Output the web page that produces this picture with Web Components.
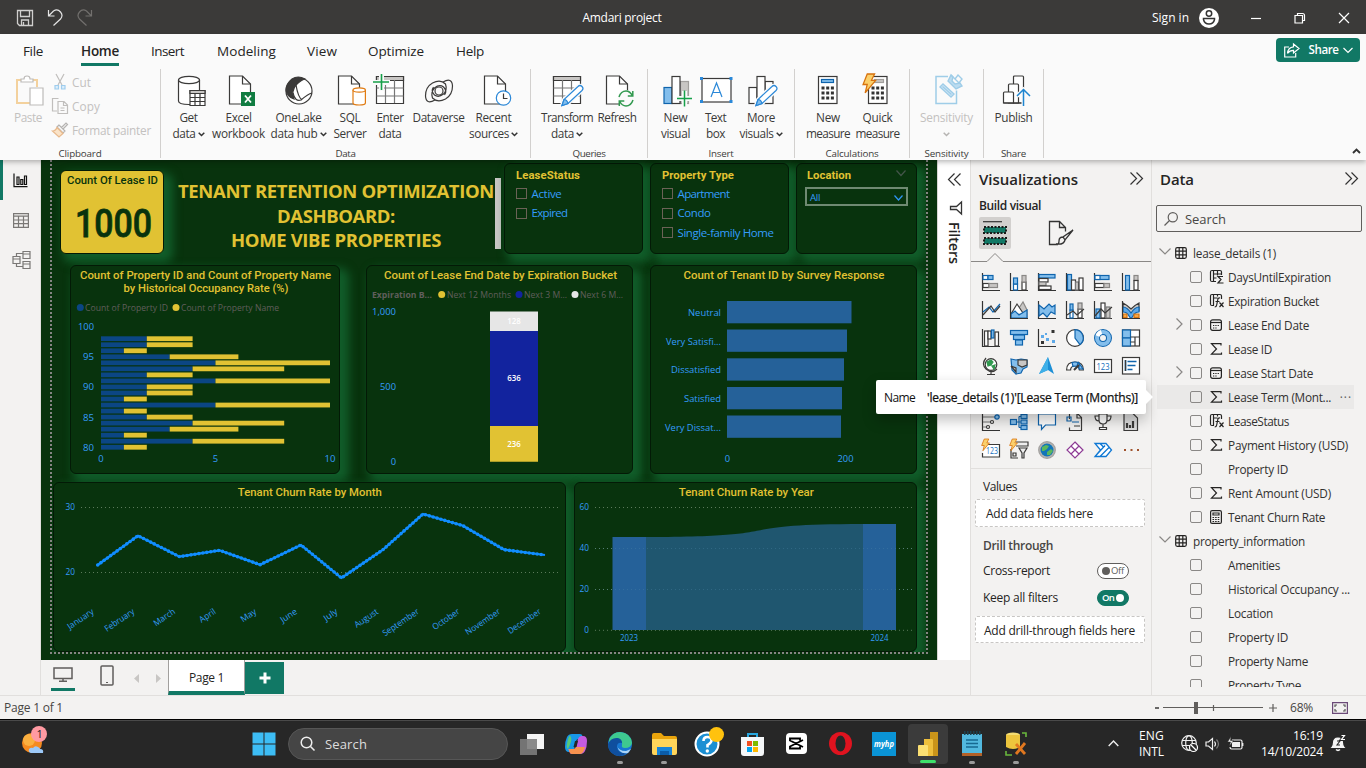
<!DOCTYPE html>
<html lang="en">
<head>
<meta charset="utf-8">
<title>Amdari project</title>
<style>
html,body{margin:0;width:1366px;height:768px;overflow:hidden;background:#f3f2f1}
body{font:12px/16px "Open Sans","Noto Sans",sans-serif;color:#252423}
</style>
</head>
<body>
<app-window></app-window>
<script>
// Registers an element whose shadow root is rebuilt from its attributes.
function define(name, css, html) {
  customElements.define(name, class extends HTMLElement {
    constructor() { super(); this.attachShadow({ mode: 'open' }); }
    connectedCallback() {
      const t = document.createElement('template');
      t.innerHTML = '<style>:host{display:block;box-sizing:border-box}' + css + '</style>' +
        (typeof html === 'function' ? html(k => this.getAttribute(k) ?? '', this) : html);
      this.shadowRoot.replaceChildren(t.content.cloneNode(true));
    }
  });
}
const S = (vb, body, w, h) => `<svg width="${w || vb.split(' ')[2]}" height="${h || vb.split(' ')[3]}" viewBox="${vb}" fill="none" stroke="#3b3a39" stroke-width="1.2">${body}</svg>`;
const page = (x, y = 1) => `<path fill="#fff" d="M${x} ${y}h13l8 8v20h-21z"/><path d="M${x + 13} ${y}v8h8"/>`;
const pencil = '<path d="M11 30.500l2-6 14-13a2.800 2.800 0 0 1 4 4l-14 13z" stroke="#fafafa" stroke-width="4"/><path fill="#fff" stroke="#2b88d8" d="M11 30.500l2-6 14-13a2.800 2.800 0 0 1 4 4l-14 13z"/><path fill="#83beec" stroke="#2b88d8" d="M11 30.500l2-6q3 0 4 4z"/>';
const bolt = (x, y, s) => `<path transform="translate(${x} ${y}) scale(${s})" d="M5 0h7l-3 6h4l-10 12 2-8h-4z" fill="#fbd06c" stroke="#d8720d"/>`;
const dots = (x, y, dx, dy) => [0, 1, 2].map(r => [0, 1, 2].map(c => `<rect x="${x + c * dx}" y="${y + r * dy}" width="3" height="3" fill="#333" stroke="none"/>`).join('')).join('');
const B = '#83beec', D = '#0f64ad', G = '#c8c6c4', K = '#3b3a39';
const axis = '<path d="M.5 0v17.500h17.500" stroke="#333"/>';
const r = (x, y, w, h, f = '#fff', s = D) => `<rect x="${x}" y="${y}" width="${w}" height="${h}" fill="${f}" stroke="${s}"/>`;
const num = (x, y, w, s) => `<text x="${x}" y="${y}" font-family="Open Sans" font-size="${s}" textLength="${w}" lengthAdjust="spacingAndGlyphs" fill="#0f6cbd" stroke="none">123</text>`;

const ICONS = {
  save: S('0 0 16 16', '<path stroke="#d0cfce" d="M.5.500h15v15h-13l-2-2zM3.500.500v6h9v-6M4.500 15v-5h7v5M6.500 12v3" stroke-width="1.300"/>'),
  undo: S('0 0 16 17', '<path stroke="#e5e5e5" d="M1.500 1v6h6M1.500 7l5-5q4-2.500 7 1t0 7l-7 6.500"/>'),
  redo: S('0 0 16 17', '<path stroke="#72706e" d="M14.500 1v6h-6M14.500 7l-5-5q-4-2.500-7 1t0 7l7 6.500"/>'),
  user: S('0 0 20 20', '<circle cx="10" cy="10" r="10" fill="#fff" stroke="none"/><circle cx="10" cy="5.500" r="2.700" stroke="#333" stroke-width="1.500"/><path d="M4.500 10.500h11v1q-1 4.500-5.500 4.500t-5.500-4.500z" stroke="#333" stroke-width="1.500"/>'),
  min: S('0 0 12 12', '<path d="M1 6.500h10" stroke="#fff"/>'),
  max: S('0 0 12 12', '<path d="M1 3.500h7.500v7.500h-7.500zM3.500 3.500v-2h5q2 0 2 2v5h-2" stroke="#fff"/>'),
  close: S('0 0 12 12', '<path d="M1 1l10 10M11 1l-10 10" stroke="#fff"/>'),
  share: S('0 0 16 15', '<path stroke="#fff" d="M5 4H.700v10h11v-4M9.500 1l5.500 4.500-5.500 4.500v-2.600q-4 0-6 3 .500-6 6-6.600z"/>'),
  chevW: S('0 0 10 7', '<path stroke="#fff" d="M.500 1l4.500 4.500 4.500-4.500"/>'),
  chev: S('0 0 7 5', '<path d="M.700.700l2.800 2.800 2.800-2.800" stroke="#333" stroke-width="1.500"/>'),
  chevG: S('0 0 7 5', '<path d="M.700.700l2.800 2.800 2.800-2.800" stroke="#b5b3b1" stroke-width="1.500"/>'),
  up: S('0 0 9 6', '<path d="M1 5l3.500-3.500 3.500 3.500" stroke="#333" stroke-width="1.900"/>'),
  paste: S('0 0 28 32', '<path d="M7 5h-6v23h13M16 5h5v7" stroke="#f3d19d" stroke-width="2"/><path d="M5 7h12v-3h-3q0-3-3-3t-3 3h-3zM14 13h13v17h-13z" fill="#fff" stroke="#bdbbb9"/>'),
  cut: S('0 0 12 16', '<path stroke="#c0bebc" d="M2 0l6 11M10 0l-6 11"/><path stroke="#9fcdee" fill="#dceefa" d="M1 11.500h3.500v3.500h-3.500zM7.500 11.500h3.500v3.500h-3.500z"/>'),
  copy: S('0 0 16 17', '<path stroke="#c0bebc" d="M5 13h-4.500v-12.500h6M6 3.500h6l3.500 3.500v8.500h-9.500zM11.500 4v3.500h4M8.500 10h4M8.500 12.500h4"/>'),
  painter: S('0 0 16 16', '<path stroke="#b5b3b1" d="M8 4l4 4M9.500 5.500l4.500-4.500 1.500 1.500-4.500 4.500M7 3l-2 2 6 6 2-2z"/><path stroke="#e8b98c" fill="#fae3c8" d="M5 5.500l6 6-4 3.500-6.500-6q3 0 4.500-3.500z"/>'),
  get: S('0 0 32 32', '<path fill="#fff" d="M5.500 5v21q0 3.500 10.500 3.500t10.500-3.500v-21"/><ellipse cx="16" cy="5" rx="10.500" ry="3.700" fill="#fff"/><path fill="#fff" d="M17 15.500h15v15h-15z"/><path fill="#c8c6c4" d="M17 15.500h15v3h-15z"/><path d="M17 22.500h15M17 26.500h15M22 18.500v12M27 18.500v12"/>'),
  excel: S('0 0 32 32', page(6.500) + '<path d="M18 17h14v14h-14z" fill="#107c41" stroke="none"/><path d="M22 20.500l6 7M28 20.500l-6 7" stroke="#fff" stroke-width="1.800"/>'),
  onelake: S('0 0 32 32', '<circle cx="16" cy="16" r="13" fill="#fff"/><path fill="#3b3a39" d="M9 4q6-4 13 0-4 1-9 6-5 6-2 14-7-2-8-9 0-6 6-11z"/><path d="M13 10q2 12 6 15M10 18q2 9 8 7 7-6 11-7"/>'),
  sql: S('0 0 32 32', page(4.500) + '<path fill="#fff" stroke="#e07b12" d="M19 15v13q0 2 6.200 2t6.200-2v-13"/><ellipse cx="25.200" cy="15" rx="6.200" ry="2.200" fill="#fff" stroke="#e07b12"/>'),
  enter: S('0 0 32 32', '<path fill="#fff" d="M2.500 1.500h27v27h-27z"/><path fill="#c8c6c4" d="M2.500 1.500h27v4h-27z"/><path d="M2.500 13h27M2.500 21h27M11.500 5v23M20.500 5v23" stroke="#777"/><path d="M7.500-1v17M-1 7.500h17" stroke="#fafafa" stroke-width="5"/><path d="M7.500-1v16M-1 7h16" stroke="#17a04a" stroke-width="1.600"/>'),
  dataverse: S('0 0 32 32', '<circle cx="16" cy="16" r="4"/><path d="M20 7q9-5 9.500 4 0 9-7 13-8 4-13-1-2-6 2-10 5-4 9-1 4 4 1 8M12 25q-9 5-9.500-4 0-9 7-13 8-4 13 1 2 6-2 10-5 4-9 1-4-4-1-8"/>'),
  recent: S('0 0 32 32', page(6.500) + '<circle cx="25.500" cy="23" r="7.200" fill="#fff" stroke="#2b88d8"/><path d="M25.500 18.500v5h4"/>'),
  transform: S('0 0 32 32', '<path fill="#fff" d="M2.500 1.500h27v27h-27z"/><path fill="#c8c6c4" d="M2.500 1.500h27v4h-27z"/><path d="M2.500 13h27M2.500 21h27M11.500 5v23M20.500 5v23" stroke="#777"/>' + pencil),
  refresh: S('0 0 32 32', page(5.500) + '<circle cx="25" cy="23.500" r="8.500" fill="#fafafa" stroke="none"/><path stroke="#31994f" stroke-width="1.500" d="M18 22q2-6 7-6 4 0 6.500 5M31.800 16v5h-5M32 25q-2 6-7 6-4 0-6.500-5M18.300 31v-5h5"/>'),
  visual: S('0 0 32 32', r(4, 12.500, 8, 16, B) + r(20.500, 6.500, 8, 22, G, '#a19f9d') + r(12, 1.500, 8, 27, '#fff', K) + '<path d="M24.500 16v16M17 23.500h15" stroke="#fafafa" stroke-width="5"/><path d="M24.500 15.500v16M17 23.500h15" stroke="#17a04a" stroke-width="1.500"/>'),
  textbox: S('0 0 32 32', r(2, 3.500, 29, 23.500, '#fff', K) + '<path fill="#2b88d8" stroke="none" d="M0 2h3v3h-3zM29.500 2h3v3h-3zM0 25h3v3h-3zM29.500 25h3v3h-3z"/><path d="M11 22l5.500-14 5.500 14M13 17.500h7" stroke="#2b88d8"/>'),
  more: S('0 0 32 32', r(4, 12.500, 8, 16, '#fff', K) + r(20, 6.500, 8, 22, '#fff', K) + r(12, 1.500, 8, 27, '#fff', K) + pencil),
  measure: S('0 0 32 32', r(6.500, 1.500, 18.500, 27, '#fff', K) + r(9.500, 4.500, 12, 3, B) + dots(9.500, 11.500, 4.700, 5)),
  quick: S('0 0 32 32', r(6.500, 1.500, 18.500, 27, '#fff', K) + r(12.500, 4.500, 9, 3, G, '#a19f9d') + dots(9.500, 11.500, 4.700, 5) + bolt(0, -1, 1.050)),
  sens: S('0 0 32 32', '<path stroke="#9fcde8" d="M17 1.500h-12v27h20.500v-13" stroke-width="1.500"/><g stroke="#9fcde8" fill="#fafafa" stroke-width="1.400"><path fill="#cfe6f5" d="M9 12l3-3 11 10-3 3z"/><path d="M11.500 11.500l9 8"/><path fill="#bcdcf0" d="M17 6l8 8 6-3-2-3-5 1-3-3 1-4-2-2z"/><path d="M20 0l5 5M27 0l4 4-3 4-4-4z"/></g>'),
  publish: S('0 0 32 32', '<path fill="#fff" d="M15.500 28v-26q0-1 1-1h8q1 0 1 1v26z"/><path fill="#fff" d="M10.500 28v-18q0-1 1-1h8q1 0 1 1v18z"/><path fill="#fff" d="M5.500 28v-10q0-1 1-1h8q1 0 1 1v10z"/><path d="M5.500 28h19"/><path d="M25.500 14v18M19 21l6.500-6.500 6.500 6.500" stroke="#fafafa" stroke-width="4"/><path d="M25.500 14v17M19 21l6.500-6.500 6.500 6.500" stroke="#1e85d0" stroke-width="1.500"/>'),
  report: S('0 0 15 15', '<path stroke="#111" d="M1 .500v13.200h13.500M4 4h2v7.500h-2zM7.800 6.500h2v5h-2zM11.500 3h2v8.500h-2z" stroke-width="1.200"/>'),
  table: S('0 0 16 15', '<path stroke="#7a7876" d="M.600.600h14.800v13.800h-14.800zM.600 3.200h14.800M.600 7h14.800M.600 10.700h14.800M5.500 3v11M10.500 3v11"/>'),
  model: S('0 0 19 18', '<path stroke="#7a7876" d="M1 5.500h7v7h-7zM1 8h7M11 .500h7v7h-7zM11 3h7M11 10.500h7v7h-7zM11 13h7M4.500 5.500v-3h6M4.500 12.500v3h6"/>'),
  desktop: S('0 0 20 15', '<path stroke="#605e5c" stroke-width="1.500" d="M1 1h18v10.500h-18zM10 12v2.500M6 14.300h8"/>'),
  phone: S('0 0 14 21', '<rect x="1" y="1" width="12" height="19" rx="1" stroke="#605e5c" stroke-width="1.500"/><path d="M6 17.500h2" stroke="#605e5c"/>'),
  left: S('0 0 5 9', '<path d="M5 0v9l-5-4.500z" fill="#c8c6c4" stroke="none"/>'),
  right: S('0 0 5 9', '<path d="M0 0v9l5-4.500z" fill="#c8c6c4" stroke="none"/>'),
  plus: S('0 0 12 12', '<path d="M6 .500v11M.500 6h11" stroke="#fff" stroke-width="3"/>'),
  collapse: S('0 0 13 13', '<path d="M6.500.500l-6 6 6 6M12.500.500l-6 6 6 6" stroke="#333"/>'),
  expand: S('0 0 13 13', '<path d="M.500.500l6 6-6 6M6.500.500l6 6-6 6" stroke="#333"/>'),
  funnel: S('0 0 12 14', '<path d="M11.500 1v12l-5-4.500h-6v-3h6z" stroke="#333" stroke-width="1.300"/>'),
  build: S('0 0 24 25', '<path d="M0 .700h19" stroke="#333"/><path d="M1 6h22v6h-22zM1 17h22v6h-22z" fill="#117865" stroke="#1b1a19" stroke-width="2" stroke-dasharray="2 1.500"/>'),
  format: S('0 0 25 25', '<path d="M9 23.500h-8.500v-23h10l6 6v4M10.500.500v6h6" stroke="#333" stroke-width="1.300"/><path d="M24 9l-10 7 2 3 8-10zM14 16q-4 0-4 4t-3 3q8 1 9-4z" stroke="#333" stroke-width="1.300" fill="#f3f2f1"/>'),
  glass: S('0 0 14 14', '<circle cx="8.800" cy="5.200" r="4.600" stroke="#605e5c"/><path d="M5.500 8.500l-5 5" stroke="#605e5c"/>'),
  tchev: S('0 0 12 7', '<path d="M.500.500l5.500 5.500 5.500-5.500" stroke="#8a8886"/>'),
  rchev: S('0 0 7 12', '<path d="M.500.500l5.500 5.500-5.500 5.500" stroke="#8a8886"/>'),
  tbl: S('0 0 12 12', '<rect x=".7" y=".7" width="10.600" height="10.600" rx="1.500" stroke="#252423"/><path stroke="#252423" d="M4.200.700v10.600M7.800.700v10.600M.700 4.200h10.600M.700 7.800h10.600"/>'),
  sigma: S('0 0 12 12', '<path stroke="#252423" d="M11 2.500v-1.800h-9.500l5 5.300-5 5.200h10v-1.800"/>'),
  cal: S('0 0 12 12', '<rect x=".6" y=".8" width="10.800" height="10.500" rx="2" stroke="#252423"/><path stroke="#252423" d="M.600 3.500h10.800"/><path d="M3 6.500h6.500M3 9h4.500" stroke="#252423" stroke-dasharray="1.300 1"/>'),
  calc: S('0 0 12 14', '<rect x=".6" y=".6" width="10.800" height="12.800" rx="1.500" stroke="#252423"/><path stroke="#252423" d="M3 3h6v2h-6z"/><path d="M2.500 7.500h7M2.500 9.500h7M2.500 11.500h7" stroke="#252423" stroke-dasharray="1.600 1"/>'),
  colsum: S('0 0 14 14', '<path stroke="#252423" d="M6 11.500h-4q-1.500 0-1.500-1.500v-8q0-1.500 1.500-1.500h8q1.500 0 1.500 1.500v3M3.500.500v11M3.500 4h8M3.500 8h3M7.500.500v5M13 6.500h-5l3 3-3 3.500h5.500"/>'),
  fx: S('0 0 14 14', '<path stroke="#252423" d="M4 11.500h-2q-1.500 0-1.500-1.500v-8q0-1.500 1.500-1.500h8q1.500 0 1.500 1.500v3M3.500.500v11M3.500 4h4M7.500.500v2M10 4q-2-.5-2.300 2l-1 5q-.3 2-2 2M5.500 7.500h4M9.500 8.500l4 4.500M13.500 8.500l-4 4.500"/>'),
  v0: axis + r(1, 2.500, 5, 4) + r(6, 2.500, 5, 4, B) + r(1, 10.500, 6, 4, '#fff', K) + r(7, 10.500, 8.500, 4, G, '#8a8886'),
  v1: axis + r(3.500, 11, 4, 6) + r(3.500, 5, 4, 6, B) + r(12, 9, 4, 8, '#fff', K) + r(12, 2.500, 4, 6.500, G, '#8a8886'),
  v2: axis + r(1, 1.500, 16, 3.500, B) + r(1, 5.500, 9, 3.500, '#fff', K) + r(1, 9, 7, 3.500, G, '#777') + r(1, 13, 12, 3.500, '#fff', K),
  v3: axis + r(1.500, 1.500, 4, 15.500, B) + r(5.500, 7, 4, 10, '#fff', K) + r(9.500, 9, 3, 8, G, '#777') + r(13, 5, 4, 12, '#fff', K),
  v4: axis + r(1, 2.500, 14, 4, B) + r(1, 2.500, 5, 4) + r(1, 10.500, 9, 4, '#fff', K) + r(10, 10.500, 5.500, 4, G, '#8a8886'),
  v5: axis + r(3.500, 2.500, 4, 14.500, B) + r(12, 2.500, 4, 5, G, '#8a8886') + r(12, 7.500, 4, 9.500, '#fff', K),
  v6: axis + '<path d="M1 11l6-5 4 5 7-8" stroke="#0f64ad"/><path d="M1 14l8-9 4 6 5-6" />',
  v7: '<path d="M7 10l6-9 4 8v8h-10z" fill="#c8c6c4" stroke="#8a8886"/><path d="M1 13l6-10 6 9" fill="#fff"/><path d="M1 13l4-3 4 4 8-5v8h-16z" fill="#83beec" stroke="#0f64ad"/>' + axis,
  v8: axis + '<path d="M1 4l5 4 5-5 3 3 3-2v9l-4-2-4 5-4-4-4 3z" fill="#83beec" stroke="#0f64ad"/>',
  v9: axis + r(4, 9, 3, 8) + r(4, 3, 3, 6, B) + r(12, 8, 4, 9, '#fff', K) + r(12, 2, 4, 6, G, '#777') + '<path d="M1 14l6-4 4 4 7-6"/>',
  v10: axis + r(2, 8, 4, 9, B) + r(7, 2, 4, 15, '#fff', K) + r(12, 6, 4, 11, G, '#777') + '<path d="M1 15l6-7 4 4 7-6"/>',
  v11: '<path d="M1 2q4 2 8 6 4-4 8-6v8q-4 0-8 6-4-6-8-6z" fill="#c8c6c4"/><path d="M1 6q4 0 8 6 4-6 8-6v5q-4 0-6 4t-4 0q-2-4-6-4z" fill="#5ea9e8" stroke="#0f64ad"/><path d="M1 13h4v3.500h-4zM12 13h5v3.500h-5z" fill="#f3a648" stroke="#d8720d"/>' + axis,
  v12: axis + r(2.500, 2, 3.500, 15, '#fff', K) + r(6, 2, 3, 8, '#fff', K) + r(9.500, 1, 2.500, 8, B) + r(13, 3, 3.500, 14, '#fff', K),
  v13: r(.500, 1.500, 17, 4, B) + r(3.500, 6, 11, 4.500, B) + r(5.500, 11, 7, 5, B),
  v14: axis + '<path d="M13.500 1h3v3h-3zM3 12h3v3h-3z" fill="#333" stroke="none"/><path d="M3 6h3v3h-3zM8 9h3v3h-3zM14 11h3v3h-3zM7 4h2v2h-2z" fill="#5ea9e8" stroke="none"/>',
  v15: '<circle cx="9" cy="9" r="8.400" fill="#fff"/><path d="M9 .600a8.400 8.400 0 0 1 5 15l-5-6.600z" fill="#83beec" stroke="#0f64ad"/>',
  v16: '<circle cx="9" cy="9" r="6" stroke="#0f64ad" stroke-width="6"/><circle cx="9" cy="9" r="6" stroke="#83beec" stroke-width="4"/><path d="M3.500 7q1-3 4-4" stroke="#fff" stroke-width="4"/>',
  v17: r(.500, 1, 17, 16, '#fff', K) + r(.500, 1, 8, 8, B) + r(.500, 9, 8, 8, B) + '<path d="M8.500 8h9M13 8v9M8.500 13h5"/>',
  v18: '<circle cx="9" cy="7.500" r="5.800" fill="#fff"/><path d="M5 5l4-2 2 2-2 3-3 1zM10 9l3-1-1 4z" fill="#31994f" stroke="#31994f"/><path d="M4 1q-5 6 0 11 6 5 11 0M9 15v2M5 17.500h8"/>',
  v19: '<path d="M1 2l5 1 5-1 6 1v7l-4 2-2 4-5 1-4-4z" fill="#83beec" stroke="#0f64ad"/><path d="M8 3l9 0v5l-5 2-4-2zM1 9l5 2v4z" fill="#c8c6c4"/>',
  v20: '<path d="M10 0l6 17-6-4-9 4z" fill="#1c8fd6" stroke="none"/><path d="M10 0l0 13-9 4z" fill="#3fb0e8" stroke="none"/>',
  v21: '<path d="M.600 13q0-8 8.400-8t8.400 8h-4q0-4-4.400-4t-4.400 4z" fill="#fff"/><path d="M6 5.500q3-1 6 0l-1 4q-2-1-4 0z M13 6l4 6h-4z" fill="#83beec" stroke="#0f64ad"/><path d="M8 13l5-5" stroke-width="2"/>',
  v22: r(.500, 2.500, 17, 13, '#fff', K) + num(2.500, 12.500, 13, 9),
  v23: r(.500, .500, 17, 16.500, '#fff', K) + '<path d="M3.500 3v11M5.500 4.500h9M5.500 8.500h8M5.500 12.500h5" stroke="#0f64ad" stroke-width="1.700"/><path d="M3.500 3v11"/>',
  v30: axis + '<path d="M1 4h12M1 9h8M1 14h5" stroke="#777"/><circle cx="15" cy="4" r="2.200" fill="#83beec" stroke="#0f64ad"/><circle cx="10" cy="9" r="1.500" fill="#fff"/><circle cx="6" cy="14" r="1.500" fill="#fff"/>',
  v31: r(.500, 6.500, 6, 5, B) + r(11, 1.500, 6, 4, B) + r(11, 7, 6, 4, B) + r(11, 12.500, 6, 4, B) + '<path d="M7 9h4M9 3.500v11M9 3.500h2M9 14.500h2" stroke="#0f64ad"/>',
  v32: '<path d="M.500 1h17v11h-10l-4 4.500v-4.500h-3z" fill="#fff" stroke="#0f64ad"/>',
  v33: '<path d="M3.500 6v-5.500h8l4 4v13h-12v-3M11 0v5h5M8 13h6" /><path d="M1 4h4v4h-4zM6 9h7" stroke="#0f64ad"/>',
  v34: '<path d="M5 1h8v6q0 4-4 4t-4-4zM5 3h-4q0 5 4 5M13 3h4q0 5-4 5M9 11v4M5.500 16.500h7v-2h-7z" fill="#fff"/>',
  v35: '<path d="M2 .500h9l4.500 4.500v12.500h-13.500z" fill="#ddd"/><path d="M5 15v-5M8 15v-3M11 15v-7" stroke-width="2.200"/>',
  v36: '<path d="M6 3.500h11.500v12.500h-17v-4" fill="#fff"/>' + num(4, 13, 12, 9) + bolt(-1, -2, .65),
  v37: '<path d="M6 1h12v4h-12M1 8v9h7M3 12h3v3h-3zM9 7h8l-3 5v5h-2v-5z" fill="#eee"/>' + bolt(-1, -2, .65),
  v38: '<circle cx="9" cy="9" r="8.300" fill="#b5b3b1" stroke="#a3a19f"/><circle cx="9" cy="9" r="6.500" fill="#1276b8" stroke="none"/><path d="M4 6l4-2 3 1-2 3-3 2-2 0zM9 11l4-3 2 2-3 4-3 0z" fill="#5cb85c" stroke="none"/>',
  v39: '<path d="M9 1l4 4-4 4-4-4zM9 9l4 4-4 4-4-4zM5 5l4 4-4 4-4-4zM13 5l4 4-4 4-4-4z" fill="#fff" stroke="#8d3a94"/>',
  v40: '<path d="M1 2.500h11l5.500 6.500-5.500 6.500h-11l5.500-6.500zM1 15.500l10-11M6 15.500l9-9M6 2.500l4 4" stroke="#0f78d4" stroke-width="1.300" fill="#fff"/>',
  v41: '<path d="M2 9h2M8.500 9h2M15 9h2" stroke="#a0522d" stroke-width="2"/>',
  fit: S('0 0 16 12', '<path stroke="#6b4a78" d="M.600.600h14.800v10.800h-14.800z"/><path stroke="#555" d="M3 5v-2h2M11 3h2v2M3 7v2h2M11 9h2v-2"/>'),
  weather: S('0 0 32 32', '<circle cx="14" cy="17" r="10" fill="#f58a1f" stroke="none"/><circle cx="11" cy="14" r="6" fill="#fbb040" stroke="none"/><path d="M13 27q-3-1-2-4 2-2 4-1 2-3 5-1 2 1 2 2 4 0 3 4z" fill="#9cc8f7" stroke="none"/><circle cx="21" cy="8" r="8" fill="#ff9aa2" stroke="none"/><text x="18.500" y="12" font-size="11" font-family="Open Sans" fill="#222" stroke="none">1</text>'),
  start: S('0 0 24 24', '<path d="M.500.500h11v11h-11zM12.500.500h11v11h-11zM.500 12.500h11v11h-11zM12.500 12.500h11v11h-11z" fill="#3dbdf5" stroke="none"/>'),
  find: S('0 0 15 15', '<circle cx="6.500" cy="6.500" r="5.300" stroke="#eee" stroke-width="1.500"/><path d="M10.500 10.500l4 4" stroke="#eee" stroke-width="1.600"/>'),
  taskview: S('0 0 24 22', '<path d="M7 1h17v15h-17z" fill="#f4f4f4" stroke="none"/><path d="M0 6h17v16h-17z" fill="#7d7d7d" opacity=".9" stroke="none"/>'),
  copilot: S('0 0 24 24', '<path d="M8 2h8q2 0 2.500 2l1 3h-5q-2 0-2.500 2l-2 8q-1 3-4 3h-1q-4 0-4-5 0-6 2-10 1.500-3 5-3z" fill="#1798e8" stroke="none"/><path d="M4 17q-2-1-1-5 1-7 3-8.500 2 2 1 6t-3 7.500z" fill="#59c878" stroke="none"/><path d="M16 22h-8q-2 0-2.500-2l-1-3h5q2 0 2.500-2l2-8q1-3 4-3h1q4 0 4 5 0 6-2 10-1.500 3-5 3z" fill="#c55be0" stroke="none"/><path d="M16 22h-8q-2 0-2.500-2l-1-3h5q2 0 2.500-2h9q-1.500 7-5 7z" fill="#f7924f" stroke="none"/><path d="M11 9h3l-1.500 6h-3z" fill="#272727" stroke="none"/>'),
  edge: S('0 0 24 24', '<circle cx="12" cy="12" r="12" fill="#1677d2" stroke="none"/><path d="M1 8q3-8 11-8 11 1 12 11-1 5-7 5-4 0-3-3 1-5-4-6-6 0-9 5z" fill="#3ec98f" stroke="none"/><path d="M0 12q3-7 10-6 4 1 4 5-5-1-5 4 1 7 10 6-6 5-12 2-7-3-7-11z" fill="#0f4f9e" stroke="none"/><path d="M9 13q1 6 9 6l5-2-3 4q-9 2-11-8z" fill="#cfeaff" stroke="none" opacity=".8"/>'),
  explorer: S('0 0 25 22', '<path d="M0 2q0-2 2-2h7l3 3h11q2 0 2 2v15h-25z" fill="#e9a40c" stroke="none"/><path d="M0 6h25v14q0 2-2 2h-21q-2 0-2-2z" fill="#ffd55a" stroke="none"/><path d="M5 14h15v8h-15z" fill="#1784d8" stroke="none"/><path d="M8 18h9v4h-9z" fill="#0b5ca8" stroke="none"/>'),
  help: S('0 0 28 28', '<circle cx="13" cy="14" r="11.500" fill="#1b8fd3" stroke="#fff" stroke-width="2"/><path d="M9.500 11q0-4 4-4t4 3.500q0 2-4 4.500v2.500" stroke="#fff" stroke-width="2.600"/><circle cx="13.300" cy="21" r="1.700" fill="#fff" stroke="none"/><circle cx="22.500" cy="4.500" r="7.500" fill="#ffc20e" stroke="none"/>'),
  store: S('0 0 23 24', '<path d="M7 6v-4h9v4" stroke="#29a8e0" stroke-width="2"/><path d="M0 5h23v16q0 3-3 3h-17q-3 0-3-3z" fill="#f5f7f9" stroke="none"/><path d="M6 9h5v5h-5z" fill="#f25022" stroke="none"/><path d="M12 9h5v5h-5z" fill="#7fba00" stroke="none"/><path d="M6 15h5v5h-5z" fill="#00a4ef" stroke="none"/><path d="M12 15h5v5h-5z" fill="#ffb900" stroke="none"/>'),
  capcut: S('0 0 21 21', '<rect width="21" height="21" rx="4" fill="#fff" stroke="none"/><path d="M17 7l-13 6.500v2h10v-2M17 14l-13-6.500v-2h10v2" stroke="#000" stroke-width="1.900"/>'),
  opera: S('0 0 23 23', '<ellipse cx="11.500" cy="11.500" rx="11.500" ry="11.500" fill="#e0131f" stroke="none"/><ellipse cx="11.500" cy="11.500" rx="5" ry="8" fill="#272727" stroke="none"/>'),
  hp: S('0 0 24 24', '<path d="M0 0h24v24h-24z" fill="#0a94d6" stroke="none"/><text x="2" y="15" font-family="Open Sans" font-style="italic" font-weight="700" font-size="9" textLength="20" lengthAdjust="spacingAndGlyphs" fill="#fff" stroke="none">myhp</text>'),
  pbi: S('0 0 20 24', '<path d="M12 0h8v24h-8z" fill="#c9941a" stroke="none"/><path d="M6 7h8q1 0 1 1v16h-9z" fill="#eebf3c" stroke="none"/><path d="M0 14q0-1 1-1h8q1 0 1 1v10h-10z" fill="#fbdf72" stroke="none"/>'),
  notepad: S('0 0 20 25', '<path d="M0 3h20v19h-20z" fill="#52b9df" stroke="none"/><path d="M0 22h20v3h-20z" fill="#b36128" stroke="none"/><path d="M2 2h17" stroke="#1d4250" stroke-width="4" stroke-dasharray="1.500 1.500"/><path d="M4 9h12M4 12.500h12M4 16h12" stroke="#176a92" stroke-width="1.500"/>'),
  tool: S('0 0 23 24', '<ellipse cx="8" cy="3" rx="7" ry="2.500" fill="#f5dd72" stroke="none"/><path d="M1 3h14v12q-7 4-14 0z" fill="#edc53d" stroke="none"/><path d="M17 1h4v4M1 19v4h6" stroke="#69b83d" stroke-width="1.600"/><path d="M11 12l9 10M20 11l-9 11" stroke="#e0771f" stroke-width="2.800"/>'),
  tup: S('0 0 11 7', '<path d="M.700 6l4.800-5 4.800 5" stroke="#eee" stroke-width="1.400"/>'),
  globe: S('0 0 18 18', '<circle cx="8" cy="8" r="7.300" stroke="#eee"/><ellipse cx="8" cy="8" rx="3.300" ry="7.300" stroke="#eee"/><path d="M1 5.500h14M1 10.500h8" stroke="#eee"/><circle cx="12.500" cy="12.500" r="4" fill="#272727" stroke="#fff"/><path d="M10 10l5 5" stroke="#fff"/>'),
  sound: S('0 0 16 14', '<path d="M1 5v4h2.500l4 3.500v-11l-4 3.500z" stroke="#eee"/><path d="M9.500 4.500q2 2.500 0 5" stroke="#eee"/><path d="M11.500 2.500q4 4.500 0 9" stroke="#777"/>'),
  batt: S('0 0 17 14', '<path d="M5 3h8.500q1.500 0 1.500 1.500v6q0 1.500-1.500 1.500h-9q-1.500 0-1.500-2M15.800 6v3" stroke="#eee"/><path d="M5 5h8v5h-8z" fill="#eee" stroke="none"/><path d="M4-.5l-3.500 5.500h3l-1 4 4-5.500h-3z" fill="#eee" stroke="#272727" stroke-width=".5"/>'),
  bell: S('0 0 15 15', '<path d="M1 11.500q1.500-1.500 1.500-4.500 0-5 4.500-5t4.500 5q0 3 1.500 4.500z" fill="#f5f5f5" stroke="#f5f5f5"/><path d="M5 13.500q2 1.800 4 0" stroke="#f5f5f5" stroke-width="1.500"/><path d="M6 5h3l-3 4h3" stroke="#272727" stroke-width="1.100"/><path d="M10.500-.5h3l-3 4h3.500" stroke="#272727" stroke-width="3"/><path d="M10.500-.5h3l-3 4h3.500" stroke="#fff"/>')
};

define('ui-icon', ':host{display:inline-flex;flex:none}svg{display:block;overflow:visible}', a => {
  const s = ICONS[a('name')] || '';
  return s.startsWith('<svg') ? s : S('0 0 18 18', s);
});

// Label that tracks its glyphs to fill the width in "w".
customElements.define('ui-t', class extends HTMLElement {
  constructor() {
    super();
    this.attachShadow({ mode: 'open' }).innerHTML = '<style>:host{display:inline-block;white-space:pre;flex:none}</style><slot></slot>';
  }
  connectedCallback() {
    const w = +this.getAttribute('w'), n = this.textContent.length;
    if (!w || !n) return;
    const range = document.createRange();
    range.selectNodeContents(this);
    const natural = range.getBoundingClientRect().width;
    this.style.letterSpacing = (w - natural) / n + 'px';
    this.style.width = w + 'px';
  }
});
const t = (w, s, cls = '') => `<ui-t w="${w}" class="${cls}">${s}</ui-t>`;
const ic = (n, cls = '') => `<ui-icon name="${n}" class="${cls}"></ui-icon>`;

define('title-bar', `:host{height:34px;background:#3b3a39;color:#fff;display:grid;grid-template-columns:562px 120px 1fr;align-items:center;font-size:12px;padding-top:1px}
  .l{display:flex;gap:14px;padding-left:17px;align-items:center}.c{text-align:center}.r{display:flex;justify-content:flex-end;align-items:center;padding-right:16px}
  .u{margin:0 31px 0 10px}.m{margin-right:32px}`,
  `<div class="l">${ic('save')}${ic('undo')}${ic('redo')}</div><div class="c">${t(79, 'Amdari project')}</div>
   <div class="r">${t(37, 'Sign in')}${ic('user', 'u')}${ic('min', 'm')}${ic('max', 'm')}${ic('close')}</div>`);

define('ribbon-tabs', `:host{height:34px;display:flex;padding:0 6px 2px 23px;font-size:13.500px;align-items:center}
  ui-t{height:31px;line-height:32px;box-sizing:border-box}.on{font-weight:600;border-bottom:3px solid #117865}
  .b{margin-left:auto;width:84px;height:24px;border-radius:4px;background:#117865;color:#fff;display:flex;align-items:center;justify-content:center;font-size:11.600px;font-weight:600}
  .b ui-t{height:auto;line-height:16px;margin:0 4px 0 9px}`,
  () => [['File', 20, 38], ['Home', 38, 32, 'on'], ['Insert', 33, 33], ['Modeling', 59, 31], ['View', 30, 31], ['Optimize', 56, 32], ['Help', 28, 0]]
    .map(([s, w, g, c]) => `<ui-t w="${w}" class="${c || ''}" style="margin-right:${g}px">${s}</ui-t>`).join('') +
    `<div class="b">${ic('share')}${t(30, 'Share')}${ic('chevW')}</div>`);

define('ribbon-button', `:host{display:flex;flex-direction:column;align-items:center;flex:none;color:#3b3a39;font-size:11.800px;line-height:16px}
  :host([off]){color:#c3c1bf}ui-icon{height:32px;margin-bottom:2px}.r{display:flex;align-items:center;gap:2px;height:16px}.r ui-icon{height:5px;margin:2px 0 0}`,
  (a, el) => {
    el.style.width = a('w') + 'px';
    const c = a('chev') ? ic(a('off') ? 'chevG' : 'chev') : '';
    return ic(a('icon')) + t(a('w1'), a('l1')) + `<div class="r">${a('l2') ? t(a('w2'), a('l2')) : ''}${c}</div>`;
  });

define('ribbon-group', `:host{display:flex;flex-direction:column;justify-content:space-between;flex:none;height:89px;border-right:1px solid #d2d0ce}
  .i{display:flex;justify-content:center;padding-top:6px}.n{text-align:center;font-size:9.800px;line-height:13px;height:11px;color:#3b3a39}`,
  (a, el) => { el.style.width = a('w') + 'px'; return `<div class="i" style="margin-left:${a('dx') || 0}px"><slot></slot></div><div class="n">${t(a('lw'), a('label'))}</div>`; });

define('clipboard-tools', `:host{display:flex;color:#c3c1bf;font-size:11.800px;width:150px;padding-left:6px}
  .p{display:flex;flex-direction:column;align-items:center;width:28px;margin-left:3px;flex:none}.p ui-icon{height:34px;margin-left:3px}
  .s{margin-left:10px;height:72px;display:grid;grid-template-rows:repeat(3,24px);margin-top:-5px;align-items:center}.s div{display:flex;align-items:center}.s ui-icon{width:16px;justify-content:center;margin-right:4px}`,
  `<div class="p">${ic('paste')}${t(28, 'Paste')}</div><div class="s"><div>${ic('cut')}${t(19, 'Cut')}</div><div>${ic('copy')}${t(28, 'Copy')}</div><div>${ic('painter')}${t(79, 'Format painter')}</div></div>`);

const rb = (icon, w, l1, w1, l2 = '', w2 = '', chev = '', off = '') =>
  `<ribbon-button icon="${icon}" w="${w}" l1="${l1}" w1="${w1}" l2="${l2}" w2="${w2}"${chev ? ' chev="1"' : ''}${off ? ' off="1"' : ''}></ribbon-button>`;
define('app-ribbon', `:host{height:126px;background:#fafafa;box-shadow:0 2px 5px rgba(0,0,0,.28);position:relative;z-index:3}
  .g{display:flex;height:91px;padding-top:1px;align-items:flex-start}.e{margin-left:auto;padding:73px 5px 0 0}`,
  `<ribbon-tabs></ribbon-tabs><div class="g">
  <ribbon-group w="161" label="Clipboard" lw="43"><clipboard-tools></clipboard-tools></ribbon-group>
  <ribbon-group w="370" label="Data" lw="20" dx="-4">${rb('get', 46, 'Get', 18, 'data', 23, 1)}${rb('excel', 54, 'Excel', 26, 'workbook', 53)}${rb('onelake', 66, 'OneLake', 46, 'data hub', 47, 1)}${rb('sql', 37, 'SQL', 21, 'Server', 33)}${rb('enter', 43, 'Enter', 27, 'data', 23)}${rb('dataverse', 54, 'Dataverse', 52)}${rb('recent', 56, 'Recent', 36, 'sources', 40, 1)}</ribbon-group>
  <ribbon-group w="117" label="Queries" lw="33">${rb('transform', 56, 'Transform', 52, 'data', 23, 1)}${rb('refresh', 44, 'Refresh', 39)}</ribbon-group>
  <ribbon-group w="147" label="Insert" lw="25">${rb('visual', 43, 'New', 24, 'visual', 29)}${rb('textbox', 37, 'Text', 21, 'box', 19)}${rb('more', 54, 'More', 28, 'visuals', 34, 1)}</ribbon-group>
  <ribbon-group w="115" label="Calculations" lw="53">${rb('measure', 51, 'New', 24, 'measure', 44)}${rb('quick', 48, 'Quick', 30, 'measure', 44)}</ribbon-group>
  <ribbon-group w="74" label="Sensitivity" lw="44">${rb('sens', 64, 'Sensitivity', 53, '', '', 1, 1)}</ribbon-group>
  <ribbon-group w="60" label="Share" lw="25">${rb('publish', 46, 'Publish', 38)}</ribbon-group>
  <div class="e">${ic('up')}</div></div>`);

define('view-rail', `:host{width:41px;border-right:1px solid #e1dfdd;background:#f3f2f1}div{height:40px;display:flex;align-items:center;justify-content:center;box-sizing:border-box;padding-left:2px}.a{border-left:3px solid #117865;padding:0 2px 0 0}`,
  `<div class="a">${ic('report')}</div><div>${ic('table')}</div><div>${ic('model')}</div>`);

// Report canvas
const T = (x, y, s, w, size, fill, extra = '') => `<text x="${x}" y="${y}" font-size="${size}" fill="${fill}" ${w ? `textLength="${w}" lengthAdjust="spacingAndGlyphs"` : ''} ${extra}>${s}</text>`;
const HEAD = ' font-family="Roboto" font-weight="500"', END = 'text-anchor="end"', MID = 'text-anchor="middle"', Y = '#e1c233', L = '#359cfb';
define('visual-card', `:host{border:1px solid #031a06;border-radius:6px;background:#08330d;box-shadow:6px 6px 10px 3px #115d2a;flex:none;position:relative}
  svg{display:block;overflow:visible;margin:-1px}`, '<slot></slot>');
const chart = (name, x, y, w, h, body) => define(name, `visual-card{width:${w}px;height:${h}px}svg{display:block;margin:-1px}`,
  () => `<visual-card><svg width="${w}" height="${h}" viewBox="${x} ${y} ${w} ${h}" font-family="Open Sans, Noto Sans, sans-serif">${body()}</svg></visual-card>`);

chart('occupancy-chart', 70, 265, 270, 209, () => {
  const d = [2, 2, 1, 3, 5, 4, 2, 5, 2, 2, 1, 5, 1, 2, 4, 3, 1, 4, 1];
  let s = T(205.500, 279, 'Count of Property ID and Count of Property Name', 251, 11.400, Y, MID + HEAD) + T(206, 292, 'by Historical Occupancy Rate (%)', 165, 11.400, Y, MID + HEAD) +
    `<circle cx="80.300" cy="307.500" r="3.500" fill="#0b4684"/><circle cx="176" cy="307.500" r="3.500" fill="${Y}"/>` +
    T(85, 311, 'Count of Property ID', 83, 9, '#605e5c') + T(181, 311, 'Count of Property Name', 98, 9, '#605e5c');
  d.forEach((v, i) => { const y = 336.300 + i * 6.030, w = v * 22.900; s += `<rect x="101" y="${y}" width="${w}" height="4.800" fill="#0b4684"/><rect x="${101 + w}" y="${y}" width="${w}" height="4.800" fill="${Y}"/>`; });
  [[100, 330], [95, 360], [90, 390], [85, 421], [80, 451]].forEach(([v, y]) => s += T(94, y, v, v > 99 ? 16 : 11, 9.400, L, END));
  return s + T(101, 462, 0, 0, 9.400, L, MID) + T(215.500, 462, 5, 0, 9.400, L, MID) + T(330, 462, 10, 11, 9.400, L, MID);
});
chart('expiration-chart', 366, 265, 267, 209, () => T(500.500, 279, 'Count of Lease End Date by Expiration Bucket', 233, 11.400, Y, MID + HEAD) +
  T(372, 298, 'Expiration B...', 60, 8.800, '#605e5c', 'font-weight="700"') +
  [[441.700, Y, 447, 'Next 12 Months', 64], [519, '#12239e', 524, 'Next 3 M...', 43], [575, '#e6e6e6', 580, 'Next 6 M...', 43]].map(([x, c, tx, s, w]) => `<circle cx="${x}" cy="294.500" r="3.500" fill="${c}"/>` + T(tx, 298, s, w, 8.800, '#605e5c')).join('') +
  T(396, 315, '1,000', 24, 9.400, L, END) + T(396, 390, 500, 16, 9.400, L, END) + T(396, 465, 0, 0, 9.400, L, END) +
  `<path d="M490 311.500h48v19.500h-48z" fill="#e6e6e6"/><path d="M490 331h48v95h-48z" fill="#12239e"/><path d="M490 426h48v35.700h-48z" fill="${Y}"/>` +
  [[128, 324], [636, 381], [236, 447]].map(([v, y]) => T(514, y, v, 13.500, 8, '#fff', MID + ' font-weight="600"')).join(''));
chart('survey-chart', 650, 265, 267, 209, () => T(784, 279, 'Count of Tenant ID by Survey Response', 201, 11.400, Y, MID + HEAD) +
  [['Neutral', 33, 301, 124.500], ['Very Satisfi...', 55, 329.500, 120], ['Dissatisfied', 50, 358.300, 117], ['Satisfied', 37, 387, 115], ['Very Dissat...', 56, 415.500, 114]].map(([s, w, y, b]) =>
    `<rect x="727" y="${y}" width="${b}" height="22.300" fill="#256199"/>` + T(721, y + 15, s, w, 9.400, L, END)).join('') +
  T(727.500, 462, 0, 0, 9.400, L, MID) + T(845.500, 462, 200, 16, 9.400, L, MID));
chart('month-chart', 53, 482, 513, 170, () => {
  const p = [[97.700, 565], [138, 535.700], [179.500, 556.700], [219.500, 550.300], [260, 564.700], [301, 545], [341.500, 578], [383, 549.700], [423, 514], [463, 525.700], [504, 549.700], [545, 555]];
  const m = [['January', 30], ['February', 34], ['March', 24], ['April', 18], ['May', 17], ['June', 18], ['July', 15], ['August', 27], ['September', 42], ['October', 31], ['November', 40], ['December', 38]];
  return T(309.800, 496, 'Tenant Churn Rate by Month', 144, 11.400, Y, MID + HEAD) + T(75, 510, 30, 9.500, 8.200, L, END) + T(75, 575, 20, 9.500, 8.200, L, END) +
    '<path d="M81 507.500H560M81 572.500H560" stroke="#5b7a5b" stroke-dasharray="1 3"/>' +
    `<polyline points="${p.join(' ')}" fill="none" stroke="#118dff" stroke-width="2.200"/><polyline points="${p.join(' ')}" fill="none" stroke="#118dff" stroke-width="3.600" stroke-linecap="round" stroke-dasharray="0 4"/>` +
    m.map(([s, w], i) => T(0, 0, s, w, 8.600, L, `${END} transform="translate(${94.500 + i * 40.650} 613) rotate(-34)"`)).join('');
});
chart('year-chart', 574, 482, 343, 170, () => T(746.300, 496, 'Tenant Churn Rate by Year', 135, 11.400, Y, MID + HEAD) +
  [[60, 507.500], [40, 548.500], [20, 589.500], [0, 630.300]].map(([v, y]) => T(589, y + 2.500, v, v ? 9.500 : 0, 8.200, L, END) + `<path d="M595 ${y}H913" stroke="#5b7a5b" stroke-dasharray="1 3"/>`).join('') +
  '<path d="M646 537C800 537 720 524 863 524V630H646z" fill="#1f566f"/><path d="M612.500 537h33.500v93h-33.500zM863 524h33v106h-33z" fill="#256199"/><path d="M595 548.500H913M595 589.500H913" stroke="#4d88a8" stroke-opacity=".35" stroke-dasharray="1 3"/>' +
  T(629, 641, 2023, 18, 8.200, L, MID) + T(879.500, 641, 2024, 18, 8.200, L, MID));

define('kpi-card', `visual-card{width:104px;height:84px;background:#e1c233;text-align:center}svg{display:block;margin:-1px}`,
  `<visual-card><svg width="104" height="84" font-family="Roboto" fill="#08330d" text-anchor="middle"><text x="52.500" y="13.500" font-size="11.400" font-weight="500" textLength="91" lengthAdjust="spacingAndGlyphs">Count Of Lease ID</text><text x="53.500" y="67" font-size="39" font-weight="500" stroke="#08330d" stroke-width=".8" textLength="77" lengthAdjust="spacingAndGlyphs">1000</text></svg></visual-card>`);
define('slicer-list', `visual-card{height:91px}.h{font:700 11.300px/12px Roboto,sans-serif;color:#e1c233;padding:6px 0 2px 11px}
  .o{display:flex;align-items:center;gap:5px;padding-left:10.500px;height:19.600px;color:#359cfb;font-size:11.500px}i{width:9px;height:9px;border:1px solid #6b6256}`,
  (a, el) => `<visual-card style="width:${a('w')}px"><div class="h">${t(a('hw'), a('label'))}</div>${a('items').split('|').map(x => x.split(':')).map(([s, w]) => `<div class="o"><i></i>${t(w, s)}</div>`).join('')}</visual-card>`);
define('slicer-drop', `visual-card{width:121px;height:91px}.h{font:700 11.300px/12px Roboto,sans-serif;color:#e1c233;padding:6px 10px 5px 10px;display:flex;justify-content:space-between}
  .d{margin:0 8px 0 8px;height:19px;box-sizing:border-box;border:2px solid #6f8a72;color:#359cfb;display:flex;align-items:center;justify-content:space-between;padding:2px 3px 0;font-size:9.800px}`,
  `<visual-card><div class="h">${t(44, 'Location')}${S('0 0 10 7', '<path d="M.500.500l4.500 5 4.500-5" stroke="#44554a"/>')}</div><div class="d">${t(10, 'All')}${S('0 0 9 6', '<path d="M.500.500l4 4.500 4-4.500" stroke="#2e96f5"/>')}</div></visual-card>`);
define('report-title', `:host{width:331px;height:73px;margin-top:15px;display:flex;color:#e1c233;font:700 18.500px/24.500px "Open Sans",sans-serif}div{flex:1;display:flex;flex-direction:column;align-items:center;padding-left:7px;padding-top:1px}i{width:6px;height:71px;background:#c8c6c4}`,
  `<div>${t(316, 'TENANT RETENTION OPTIMIZATION')}${t(118, 'DASHBOARD:')}${t(210, 'HOME VIBE PROPERTIES')}</div><i></i>`);

define('report-canvas', `:host{width:896px;height:500px;background:#08330d;padding:0 9px 6px;overflow:hidden}
  .pg{height:494px;box-sizing:border-box;border:dotted #858583;border-width:0 2px 2px;overflow:hidden}
  .a{display:flex;padding:3px 0 0 8px;height:94px;box-sizing:border-box}.a kpi-card{margin:7px 6px 0 0}.a report-title{margin-right:3px}.a slicer-list{margin-right:7px}
  .b{display:flex;margin:11px 0 0 18px}.c{display:flex;gap:8px;margin:8px 0 0 1px}`,
  `<div class="pg"><div class="a"><kpi-card></kpi-card><report-title></report-title><slicer-list w="139" label="LeaseStatus" hw="64" items="Active:30|Expired:36"></slicer-list><slicer-list w="139" label="Property Type" hw="72" items="Apartment:52|Condo:33|Single-family Home:96"></slicer-list><slicer-drop></slicer-drop></div>
  <div class="b"><occupancy-chart style="margin-right:26px"></occupancy-chart><expiration-chart style="margin-right:17px"></expiration-chart><survey-chart></survey-chart></div>
  <div class="c"><month-chart></month-chart><year-chart></year-chart></div></div>`);

define('page-tabs', `:host{height:35px;display:flex;background:#f3f2f1;align-items:flex-start}
  .v{width:24px;height:31px;display:flex;flex-direction:column;align-items:center;box-sizing:border-box;margin-left:10px}.on{border-bottom:3px solid #117865;padding-top:7px}.ph{margin-left:20px;padding-top:5px}
  .l{margin:14px 0 0 15px}.r{margin:14px 7px 0 17px}.t{width:77px;height:35px;box-sizing:border-box;background:#fff;border:1px solid #a19f9d;border-width:0 1px 0;border-bottom:4px solid #117865;text-align:center;line-height:36px;font-size:12px}
  .p{width:39px;height:32px;margin-top:2px;background:#117865;display:flex;align-items:center;justify-content:center}`,
  `<div class="v on">${ic('desktop')}</div><div class="v ph">${ic('phone')}</div>${ic('left', 'l')}${ic('right', 'r')}<div class="t">${t(35, 'Page 1')}</div><div class="p">${ic('plus')}</div>`);

define('filters-pane', `:host{width:33px;height:500px;background:#fff;display:flex;flex-direction:column;align-items:center;padding-top:13px;border-left:1px solid #d8d6d4}
  span{writing-mode:vertical-rl;font-size:14.500px;font-weight:600;letter-spacing:-.2px;line-height:18px;margin-top:7px}ui-icon+ui-icon{margin:15px 0 0 4px}`,
  `${ic('collapse')}${ic('funnel')}<span>Filters</span>`);

define('drop-well', `:host{border:1px dashed #c8c6c4;background:#fff;margin:0 6px 0 4px;display:flex;align-items:center;padding:2px 0 0 10px;font-size:12px;border-radius:2px}`, '<slot></slot>');
define('toggle-pill', `:host{width:32px;height:16px;border-radius:8px;border:1px solid #605e5c;background:#fff;display:flex;align-items:center;justify-content:space-between;padding:0 4px;font-size:9.500px;line-height:14px;color:#605e5c}
  i{width:8px;height:8px;border-radius:50%;background:#605e5c}:host([on]){background:#117865;border-color:#117865;color:#fff;font-weight:600}:host([on]) i{background:#fff}`,
  (a, el) => el.hasAttribute('on') ? `${t(12, 'On')}<i></i>` : `<i></i>${t(13, 'Off')}`);
define('viz-pane', `:host{width:182px;background:#f3f2f1;border:1px solid #e1dfdd;border-width:0 1px}
  .h{display:flex;justify-content:space-between;align-items:center;padding:7px 8px 0 8px;height:30px;box-sizing:border-box;font-weight:600;font-size:15px;line-height:20px}
  .s{padding:8px 0 3px 8px;font-weight:600;font-size:12px;line-height:16px}.m{display:flex;padding-left:8px;height:32px}.m div{width:32px;display:flex;align-items:center;justify-content:center;background:#d2d0ce;border-radius:2px}.m div+div{background:none;margin-left:34px}
  .n{display:block;margin-top:2px}.g{display:grid;grid-template-columns:repeat(6,28px);grid-auto-rows:28px;padding:5px 0 4px 6px;justify-items:center;align-items:center;border-bottom:1px solid #e1dfdd}
  .v{padding:10px 0 4px 12px}.d{padding:11px 0 0 12px;font-weight:600;color:#484644}.k{display:flex;justify-content:space-between;padding:0 22px 0 12px;height:27px;align-items:center}`,
  () => `<div class="h">${t(99, 'Visualizations')}${ic('expand')}</div><div class="s">${t(62, 'Build visual')}</div><div class="m"><div>${ic('build')}</div><div>${ic('format')}</div></div>
  <svg class="n" width="180" height="12" fill="none" stroke="#8a8886"><path d="M0 10.500h16l8-8 8 8h148"/></svg>
  <div class="g">${Array.from({ length: 42 }, (_, i) => ic('v' + i)).join('')}</div>
  <div class="v">${t(34, 'Values')}</div><drop-well style="height:28px">${t(107, 'Add data fields here')}</drop-well>
  <div class="d">${t(70, 'Drill through')}</div><div class="k" style="margin-top:3px">${t(67, 'Cross-report')}<toggle-pill></toggle-pill></div><div class="k">${t(75, 'Keep all filters')}<toggle-pill on></toggle-pill></div>
  <drop-well style="height:27px;margin-top:5px;padding-left:8px">${t(151, 'Add drill-through fields here')}</drop-well>`);

define('tree-table', `:host{height:24px;display:flex;align-items:center;padding-left:7px}.x{margin:-3px 4px 0 0}.y{margin-right:6px}`,
  a => `${ic('tchev', 'x')}${ic('tbl', 'y')}${t(a('w'), a('label'))}`);
define('tree-field', `:host{height:24px;display:grid;grid-template-columns:14px 14px 6px 14px 4px 1fr auto;align-items:center;padding:0 4px 0 19px}:host([hot]){background:#eae9e8;margin-right:12px;padding-right:2px}
  i{width:10px;height:10px;border:1px solid #8a8886;border-radius:2px;margin-top:-1px}b{font-weight:400;letter-spacing:1px;color:#605e5c}`,
  (a, el) => `<div>${a('open') ? ic('rchev') : ''}</div><i></i><span></span><div style="display:flex">${a('icon') ? ic(a('icon')) : ''}</div><span></span>${t(a('w'), a('label'))}${el.hasAttribute('hot') ? '<b>···</b>' : ''}`);
const fields = l => l.map(([s, w, i = '', o = '', h = '']) => `<tree-field label="${s}" w="${w}" icon="${i}" open="${o}" ${h}></tree-field>`).join('');
define('data-pane', `:host{width:214px;background:#f3f2f1;color:#323130}
  .h{display:flex;justify-content:space-between;align-items:center;padding:7px 8px 0 8px;height:30px;box-sizing:border-box;font-weight:600;font-size:15px;line-height:20px;color:#252423}
  .q{margin:15px 4px 0;height:27px;box-sizing:border-box;border:1px solid #605e5c;border-radius:2px;display:flex;align-items:center;gap:7px;padding-left:7px;font-size:13px}
  .b{display:grid;grid-template-columns:1fr 8px;height:447px;margin:8px 4px 0 5px;overflow:hidden}.b>div{padding-top:1px;width:209px;overflow:hidden}.q ui-t{color:#484644}
  .b tree-table{padding-left:2px}.sb{height:277px;background:#c8c6c4}.f{font-size:11.800px}`,
  `<div class="h">${t(34, 'Data')}${ic('expand')}</div><div class="q">${ic('glass')}${t(41, 'Search')}</div>
  <div class="b"><div class="f"><tree-table label="lease_details (1)" w="83"></tree-table>${fields([['DaysUntilExpiration', 103, 'colsum'], ['Expiration Bucket', 91, 'fx'], ['Lease End Date', 81, 'cal', 1], ['Lease ID', 44, 'sigma'], ['Lease Start Date', 85, 'cal', 1], ['Lease Term (Mont...', 103, 'sigma', '', 'hot'], ['LeaseStatus', 61, 'fx'], ['Payment History (USD)', 120, 'sigma'], ['Property ID', 60], ['Rent Amount (USD)', 103, 'sigma'], ['Tenant Churn Rate', 97, 'calc']])}
  <tree-table label="property_information" w="112"></tree-table>${fields([['Amenities', 52], ['Historical Occupancy ...', 122], ['Location', 45], ['Property ID', 60], ['Property Name', 80], ['Property Type', 73]])}</div><i class="sb"></i></div>`);

define('status-bar', `:host{height:25px;border-top:1px solid #e1dfdd;border-bottom:1px solid #000;background:#f3f2f1;display:flex;align-items:center;padding:1px 18px 0 4px;color:#484644;font-size:12px}
  .z{margin-left:auto;display:flex;align-items:center}.p{margin:0 19px 0 13px}svg{display:block}`,
  `${t(59, 'Page 1 of 1')}<div class="z">${S('0 0 5 2', '<path d="M0 1h4" stroke-width="1.500"/>')}${`<div style="margin:0 6px 0 3px">${S('0 0 100 12', '<path d="M0 5.500h100M50.500 3v6" stroke="#605e5c"/><path d="M31 0h4v12h-4z" fill="#605e5c" stroke="none"/>')}</div>`}${S('0 0 8 8', '<path d="M0 4h8M4 0v8" stroke="#605e5c"/>')}${t(23, '68%', 'p')}${ic('fit')}</div>`);

define('task-bar', `:host{height:48px;background:#272727;border-top:1px solid #4a4a4a;display:flex;align-items:center;color:#fff;font-size:12px;line-height:16px;padding-bottom:2px}
  .w{width:242px;padding-left:18px;box-sizing:border-box}.a{width:44px;height:40px;display:flex;align-items:center;justify-content:center;position:relative;flex:none}
  .s{width:220px;height:32px;border-radius:16px;background:#454545;border:1px solid #565656;box-sizing:border-box;margin:0 2px;display:flex;align-items:center;gap:10px;padding-left:11px;font-size:13px;color:#ddd}
  .a.r::after,.a.on::after{content:"";position:absolute;bottom:0;width:6px;height:3px;border-radius:2px;background:#9a9a9a}
  .on::before{content:"";position:absolute;inset:0 2px;background:#3b3b3b;border-radius:4px}.a.on::after{width:16px;background:#3ee06b;bottom:1px}.on ui-icon{position:relative}
  .t{margin-left:auto;display:flex;align-items:center;padding-right:20px}.e{margin:0 17px 0 20px;display:grid;justify-items:center}.d{display:grid;justify-items:end;margin:0 8px 0 17px}.i{display:flex;gap:6px;align-items:center}`,
  `<div class="w">${ic('weather')}</div><div class="a">${ic('start')}</div><div class="s">${ic('find')}${t(42, 'Search')}</div>` +
  [['taskview'], ['copilot'], ['edge', 'r'], ['explorer', 'r'], ['help'], ['store'], ['capcut'], ['opera'], ['hp'], ['pbi', 'on'], ['notepad', 'r'], ['tool', 'r']].map(([n, c]) => `<div class="a ${c || ''}">${ic(n)}</div>`).join('') +
  `<div class="t">${ic('tup')}<div class="e">${t(25, 'ENG')}${t(25, 'INTL')}</div><div class="i">${ic('globe')}${ic('sound')}${ic('batt')}</div><div class="d">${t(30, '16:19')}${t(62, '14/10/2024')}</div>${ic('bell')}</div>`);

define('field-tooltip', `:host{position:absolute;left:876px;top:380px;width:270px;height:34px;background:#fff;border-radius:2px;box-shadow:0 6px 14px rgba(0,0,0,.25);z-index:5;display:flex;align-items:center;padding:1px 0 0 8px;color:#111;font-size:12px}
  .v{margin-left:12px;-webkit-text-stroke:.25px #111}:host::after{content:"";position:absolute;left:270px;top:10px;border:7px solid transparent;border-left-color:#fff;border-right:0}`,
  t(31, 'Name') + t(211, "'lease_details (1)'[Lease Term (Months)]", 'v'));

define('app-window', `:host{width:1366px;height:768px;display:grid;grid-template-rows:34px 126px 535px 25px 48px;position:relative;overflow:hidden}
  main{display:grid;grid-template-columns:41px 929px 182px 214px;min-height:0}.c{display:flex;flex-direction:column;overflow:hidden}.r{display:flex}data-pane{overflow:hidden}viz-pane{overflow:hidden}`,
  `<title-bar></title-bar><app-ribbon></app-ribbon><main><view-rail></view-rail><div class="c"><div class="r"><report-canvas></report-canvas><filters-pane></filters-pane></div><page-tabs></page-tabs></div><viz-pane></viz-pane><data-pane></data-pane></main><status-bar></status-bar><task-bar></task-bar><field-tooltip></field-tooltip>`);
</script>
</body>
</html>
